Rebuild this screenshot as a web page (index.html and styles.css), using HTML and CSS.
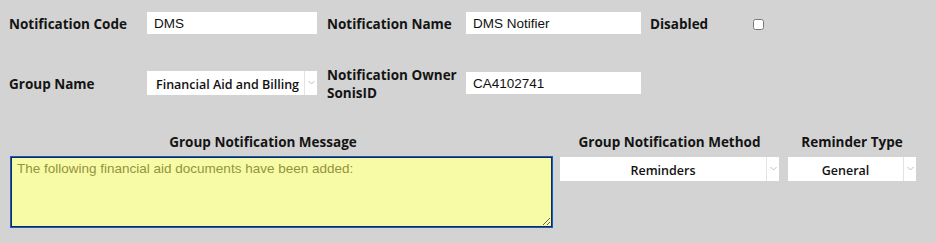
FILE: index.html
```html
<!DOCTYPE html>
<html>
	<head>
		<meta charset="utf-8" />
		<title>Notification</title>
		<link rel="stylesheet" href="styles.css">
	</head>
	<body>
		<div class="form">
			<div class="row row1">
				<label class="lbl lbl1">Notification Code</label>
				<input class="txt txt1" type="text" value="DMS" />
				<label class="lbl lbl2">Notification Name</label>
				<input class="txt txt2" type="text" value="DMS Notifier" />
				<label class="lbl lbl3">Disabled</label>
				<input class="chk" type="checkbox" />
			</div>

			<div class="row row2">
				<label class="lbl lbl1">Group Name</label>
				<div class="sel sel1">
					<select><option>Financial Aid and Billing</option></select>
					<span class="arrow"><svg width="7" height="5" viewBox="0 0 7 5"><path d="M0.5 1 L3.5 4 L6.5 1" fill="none" stroke="#c0c0c0" stroke-width="1"/></svg></span>
				</div>
				<label class="lbl lbl2">Notification Owner<br>SonisID</label>
				<input class="txt txt2" type="text" value="CA4102741" />
			</div>

			<div class="row row3">
				<div class="col msg">
					<h3 class="head">Group Notification Message</h3>
					<textarea class="note">The following financial aid documents have been added:</textarea>
				</div>
				<div class="col method">
					<h3 class="head">Group Notification Method</h3>
					<div class="sel center">
						<select><option>Reminders</option></select>
						<span class="arrow"><svg width="7" height="5" viewBox="0 0 7 5"><path d="M0.5 1 L3.5 4 L6.5 1" fill="none" stroke="#c0c0c0" stroke-width="1"/></svg></span>
					</div>
				</div>
				<div class="col rtype">
					<h3 class="head">Reminder Type</h3>
					<div class="sel center">
						<select><option>General</option></select>
						<span class="arrow"><svg width="7" height="5" viewBox="0 0 7 5"><path d="M0.5 1 L3.5 4 L6.5 1" fill="none" stroke="#c0c0c0" stroke-width="1"/></svg></span>
					</div>
				</div>
			</div>
		</div>
	</body>
</html>
```

FILE: styles.css
```css
*{
	padding: 0;
	margin: 0;
	box-sizing: border-box;
}
html,body{
	width: 100%;
	height: 100%;
	background-color: #d3d3d3;
}
.form{
	padding: 12px 0 0 9px;
	font-family: "Open Sans", Lato, sans-serif;
	color: #141414;
}
.row{
	display: flex;
	align-items: center;
}
.lbl{
	font-weight: 700;
	font-size: 13.5px;
	line-height: 18px;
	padding-top: 2px;
}
.lbl1{
	width: 138px;
}
.lbl2{
	width: 139px;
	margin-left: 10px;
}
.lbl3{
	width: 104px;
	margin-left: 9px;
}
.txt{
	height: 22px;
	border: none;
	outline: none;
	background-color: white;
	padding: 0 7px;
	font-family: "Liberation Sans", Arial, sans-serif;
	font-size: 13.5px;
	color: #111;
}
.txt1{
	width: 170px;
}
.txt2{
	width: 175px;
}
.chk{
	width: 11px;
	height: 11px;
	margin: 3px 0 0 -1px;
}
.row2{
	margin-top: 30px;
}
.sel{
	display: flex;
	height: 24px;
	background-color: white;
}
.sel1{
	width: 170px;
}
.sel select{
	flex: 1;
	min-width: 0;
	border: none;
	outline: none;
	background: transparent;
	-webkit-appearance: none;
	appearance: none;
	font-family: "Open Sans", Lato, sans-serif;
	font-weight: 600;
	font-size: 12.5px;
	color: #111;
	padding: 3px 0 0 9px;
}
.sel .arrow{
	width: 13px;
	border-left: 1px solid #e3e3e3;
	display: flex;
	align-items: center;
	justify-content: center;
	padding-bottom: 2px;
}
.row3{
	margin-top: 31px;
	align-items: flex-start;
}
.col{
	display: flex;
	flex-direction: column;
}
.head{
	font-size: 13.5px;
	font-weight: 700;
	line-height: 18px;
	text-align: center;
	margin-bottom: 6px;
}
.msg .head{
	width: 506px;
	margin-left: 1px;
}
.note{
	width: 541px;
	height: 70px;
	margin-left: 2px;
	border: 1px solid #1e2a3c;
	box-shadow: 0 0 0 1px #0d5bd8;
	outline: none;
	background-color: #f8fba6;
	color: #939340;
	font-family: "Liberation Sans", Arial, sans-serif;
	font-size: 13.5px;
	padding: 3px 5px;
	resize: both;
}
.method{
	width: 219px;
	margin-left: 8px;
}
.rtype{
	width: 128px;
	margin-left: 9px;
}
.center .head{
	margin-bottom: 7px;
}
.center select{
	text-align: center;
	text-align-last: center;
	padding: 3px 0 0 0;
}
```
